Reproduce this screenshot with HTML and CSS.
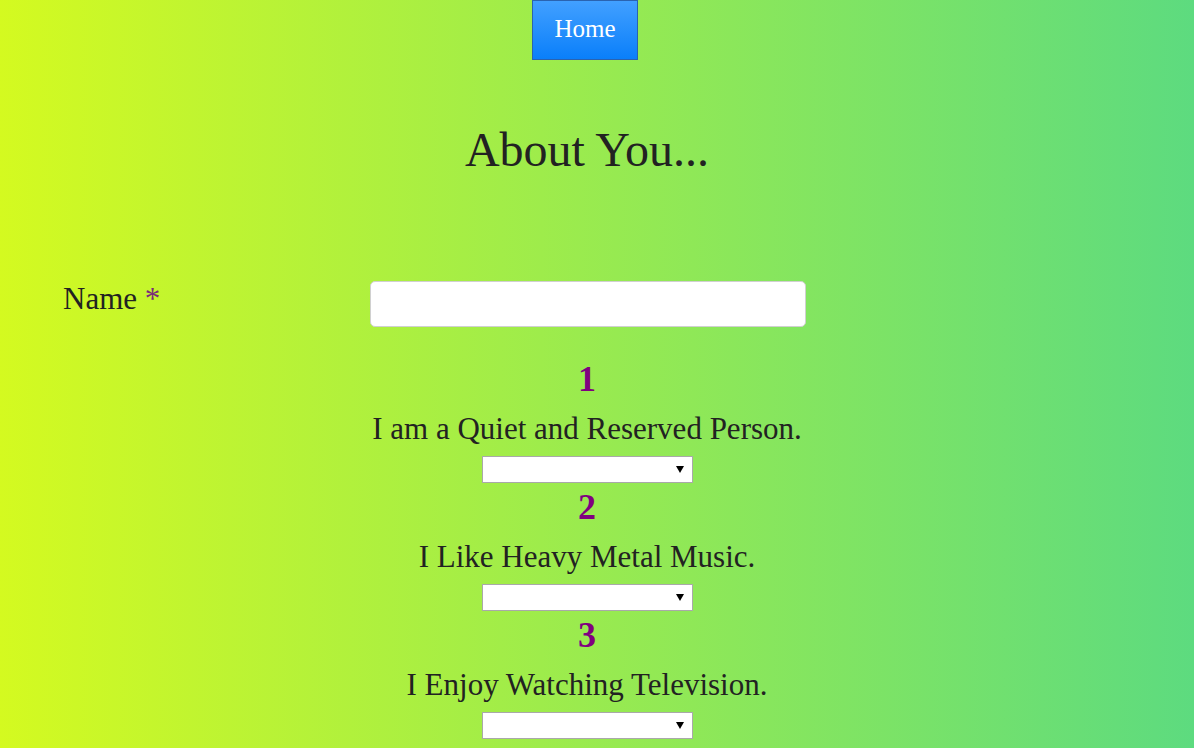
FILE: index.html
```html
<!DOCTYPE html>
<html>
<head>
<meta charset="utf-8">
<link rel="stylesheet" href="styles.css">
</head>
<body>
<div class="page">
  <nav class="nav"><a class="home-btn" href="#">Home</a></nav>
  <h1 class="title">About You...</h1>
  <form class="form">
    <div class="name-row">
      <label class="name-label">Name <span class="req">*</span></label>
      <input class="name-input" type="text">
    </div>
    <div class="question">
      <div class="qnum">1</div>
      <div class="qtext">I am a Quiet and Reserved Person.</div>
      <span class="select-wrap"><select class="qselect"><option></option></select></span>
    </div>
    <div class="question">
      <div class="qnum">2</div>
      <div class="qtext">I Like Heavy Metal Music.</div>
      <span class="select-wrap"><select class="qselect"><option></option></select></span>
    </div>
    <div class="question">
      <div class="qnum">3</div>
      <div class="qtext">I Enjoy Watching Television.</div>
      <span class="select-wrap"><select class="qselect"><option></option></select></span>
    </div>
  </form>
</div>
</body>
</html>
```
FILE: styles.css
```css
html, body {
  margin: 0;
  padding: 0;
}
body {
  min-height: 748px;
  background: linear-gradient(to right, #d4fa20 0%, #5ddb7f 100%);
  font-family: "Liberation Serif", serif;
  color: #222;
}
.page {
  width: 1174px;
  display: flex;
  flex-direction: column;
  align-items: center;
}
.nav {
  display: flex;
  justify-content: center;
}
.home-btn {
  box-sizing: border-box;
  width: 106px;
  height: 60px;
  margin-left: -4px;
  display: flex;
  align-items: center;
  justify-content: center;
  background: linear-gradient(to bottom, #42a0ff 0%, #0a7ffa 100%);
  border: 1px solid #2a63b0;
  color: #fff;
  font-size: 25px;
  text-decoration: none;
  padding-bottom: 2px;
}
.title {
  margin: 62px 0 0 0;
  font-size: 48px;
  font-weight: normal;
  line-height: 56px;
  color: #222;
}
.form {
  width: 100%;
  display: flex;
  flex-direction: column;
  align-items: center;
}
.name-row {
  width: 100%;
  box-sizing: border-box;
  margin-top: 101px;
  padding-left: 63px;
  display: flex;
  align-items: flex-start;
}
.name-label {
  width: 307px;
  font-size: 31px;
  line-height: 40px;
}
.req {
  color: #7a2a7a;
}
.name-input {
  box-sizing: border-box;
  width: 436px;
  height: 46px;
  margin-top: 2px;
  border: 1px solid #d0d0d0;
  border-radius: 5px;
  background: #fff;
}
.question {
  display: flex;
  flex-direction: column;
  align-items: center;
}
.name-row + .question {
  margin-top: 30px;
}
.question + .question {
  margin-top: 2px;
}
.qnum {
  font-size: 36px;
  font-weight: bold;
  line-height: 44px;
  color: #800080;
}
.qtext {
  margin-top: 8px;
  font-size: 31px;
  line-height: 40px;
  color: #222;
}
.select-wrap {
  position: relative;
  display: block;
  margin-top: 7px;
  margin-left: 1px;
  width: 211px;
  height: 27px;
}
.qselect {
  box-sizing: border-box;
  -webkit-appearance: none;
  appearance: none;
  width: 211px;
  height: 27px;
  border: 1px solid #a9a9a9;
  border-radius: 0;
  background: #fff;
  margin: 0;
  display: block;
}
.select-wrap::after {
  content: "";
  position: absolute;
  right: 9px;
  top: 10px;
  width: 0;
  height: 0;
  border-left: 4px solid transparent;
  border-right: 4px solid transparent;
  border-top: 7px solid #000;
  pointer-events: none;
}
```
